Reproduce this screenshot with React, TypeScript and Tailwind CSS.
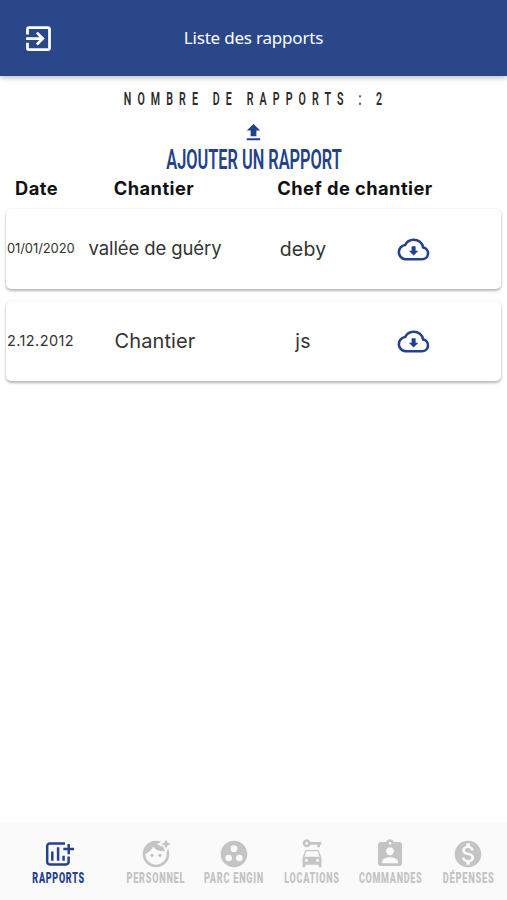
import clsx from "clsx";
import type { ComponentType } from "react";
import {
  MdAssignmentInd,
  MdCarRental,
  MdExitToApp,
  MdFaceRetouchingNatural,
  MdFileUpload,
  MdGroupWork,
  MdMonetizationOn,
} from "react-icons/md";

interface Report {
  date: string;
  site: string;
  chief: string;
  dateClass: string;
  siteClass: string;
}

interface Tab {
  label: string;
  icon: ComponentType<{ className?: string }>;
  // horizontal squeeze of the label, the display face is condensed
  squeeze: string;
}

function ChartPlus({ className }: { className?: string }) {
  return (
    <svg viewBox="0 0 32 32" className={className}>
      <path
        d="M22 5.6H6.6a2.4 2.4 0 0 0-2.4 2.4v16a2.4 2.4 0 0 0 2.4 2.4h16.6a2.4 2.4 0 0 0 2.4-2.4v-5.4M20.3 11h10.8M25.7 5.9v10.4"
        fill="none"
        stroke="currentColor"
        strokeWidth="2.5"
      />
      <path
        d="M9.3 13.6v9.2M15.1 9.3v13.5M20.6 17.8v5"
        fill="none"
        stroke="currentColor"
        strokeWidth="2.5"
      />
    </svg>
  );
}

const reports: Report[] = [
  {
    date: "01/01/2020",
    site: "vallée de guéry",
    chief: "deby",
    dateClass: "text-[13px] tracking-[-0.1px]",
    siteClass: "text-[18.5px] tracking-[-0.1px]",
  },
  {
    date: "2.12.2012",
    site: "Chantier",
    chief: "js",
    dateClass: "text-[14.5px] tracking-[0.4px]",
    siteClass: "text-[20px] tracking-[0.1px]",
  },
];

const tabs: Tab[] = [
  { label: "Rapports", icon: ChartPlus, squeeze: "scale-x-[0.6]" },
  { label: "Personnel", icon: MdFaceRetouchingNatural, squeeze: "scale-x-[0.61]" },
  { label: "Parc engin", icon: MdGroupWork, squeeze: "scale-x-[0.61]" },
  { label: "Locations", icon: MdCarRental, squeeze: "scale-x-[0.6]" },
  { label: "Commandes", icon: MdAssignmentInd, squeeze: "scale-x-[0.6]" },
  { label: "Dépenses", icon: MdMonetizationOn, squeeze: "scale-x-[0.62]" },
];

function CloudDownload() {
  return (
    <svg viewBox="0 0 33 23" className="h-[23px] w-[33px] text-[#24418c]">
      <path
        d="M8.2 21.3h16.6a6 6 0 0 0 1.3-11.9C25.2 4.9 21.4 1.7 16.6 1.7c-3.7 0-6.9 2-8.4 5.3a7.2 7.2 0 0 0 0 14.3Z"
        fill="none"
        stroke="currentColor"
        strokeWidth="2.6"
        strokeLinejoin="round"
      />
      <path d="M14.6 8.3h4v4.4h2.8l-4.8 4.9-4.8-4.9h2.8z" fill="currentColor" />
    </svg>
  );
}

function Header() {
  return (
    <header className="relative z-10 grid h-[76px] shrink-0 grid-cols-[77px_1fr_77px] items-center bg-[#2a478a] text-white shadow-[0_2px_5px_rgba(0,0,0,0.25)]">
      <button className="flex justify-center">
        <MdExitToApp className="size-[33px]" />
      </button>
      <h1 className="text-center font-['Noto_Sans',sans-serif] text-[17px] tracking-[-0.2px]">
        Liste des rapports
      </h1>
    </header>
  );
}

function ReportCard({ report }: { report: Report }) {
  return (
    <div className="flex h-[80px] items-center rounded-[5px] bg-white text-[#333] shadow-[0_2px_3px_rgba(0,0,0,0.28),0_0_2px_rgba(0,0,0,0.1)]">
      <p className={clsx("w-[68px] pl-px whitespace-nowrap", report.dateClass)}>
        {report.date}
      </p>
      <p className={clsx("w-[162px] text-center", report.siteClass)}>
        {report.site}
      </p>
      <p className="w-[134px] pt-px text-center text-[19.5px] tracking-[0.2px]">
        {report.chief}
      </p>
      <button className="ml-[27px]">
        <CloudDownload />
      </button>
    </div>
  );
}

function BottomNav() {
  return (
    <nav className="grid h-[78px] shrink-0 grid-cols-[117px_repeat(5,78px)] bg-[#fafafa]">
      {tabs.map((tab, idx) => {
        const Icon = tab.icon;
        return (
          <button
            key={tab.label}
            className={clsx(
              "flex flex-col items-center pt-[16px]",
              idx === 0 ? "text-[#24418c]" : "text-[#c4c4c4]"
            )}
          >
            <Icon className="size-[32px] shrink-0" />
            <span
              className={clsx(
                "mt-[-1px] inline-block pl-px font-['Roboto',sans-serif] text-[15px] leading-[18px] font-black tracking-[1.2px] whitespace-nowrap uppercase",
                tab.squeeze
              )}
            >
              {tab.label}
            </span>
          </button>
        );
      })}
    </nav>
  );
}

export default function App() {
  return (
    <div className="flex h-[900px] w-[507px] flex-col overflow-hidden bg-white font-['Inter',sans-serif]">
      <Header />

      <main className="flex flex-1 flex-col">
        <div className="flex h-[46px] items-center justify-center">
          <p className="scale-x-[0.575] pt-px pl-[9px] font-['Roboto',sans-serif] text-[18.5px] font-semibold tracking-[10.6px] whitespace-nowrap text-[#2b2b2b] uppercase">
            Nombre de rapports : 2
          </p>
        </div>

        <button className="-mt-px flex h-[53px] flex-col items-center text-[#24418c]">
          <MdFileUpload className="size-[23px] shrink-0" />
          <span className="scale-x-[0.605] font-['Roboto',sans-serif] text-[27px] leading-[32px] font-semibold whitespace-nowrap uppercase">
            Ajouter un rapport
          </span>
        </button>

        <div className="flex h-[30px] items-center text-[18.3px] font-bold tracking-[0.45px] text-[#111]">
          <p className="w-[73px] text-center">Date</p>
          <p className="w-[162px] text-center">Chantier</p>
          <p className="w-[240px] text-center">Chef de chantier</p>
        </div>

        <div className="flex flex-col gap-[12px] px-1.5 pt-[5px]">
          {reports.map((report) => (
            <ReportCard key={report.date} report={report} />
          ))}
        </div>
      </main>

      <BottomNav />
    </div>
  );
}
